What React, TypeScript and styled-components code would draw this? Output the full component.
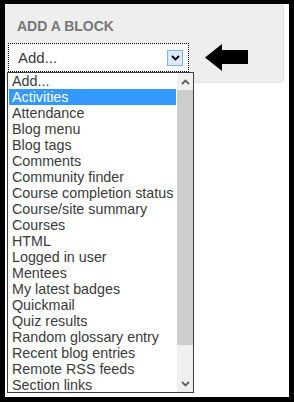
import React from "react";
import styled, { createGlobalStyle } from "styled-components";

const Global = createGlobalStyle`
  html, body { margin: 0; padding: 0; background: #000; }
  * { box-sizing: border-box; }
`;

const Frame = styled.div`
  width: 294px;
  height: 402px;
  border-style: solid;
  border-color: #000;
  border-width: 4px 5px 5px 5px;
  background: #fff;
  font-family: Arial, "Liberation Sans", sans-serif;
  overflow: hidden;
`;

const Panel = styled.div`
  width: 278px;
  height: 78px;
  background: #eeeeee;
  border-bottom-right-radius: 4px;
  box-shadow: 1px 1px 1px rgba(0, 0, 0, 0.12);
  padding: 14px 0 0 3px;
`;

const Title = styled.h2`
  margin: 0 0 9px 9px;
  font-size: 14px;
  line-height: 16px;
  font-weight: bold;
  color: #777;
  text-transform: uppercase;
`;

const Row = styled.div`
  display: flex;
  align-items: center;
`;

const Dropdown = styled.div`
  position: relative;
`;

const SelectBox = styled.div`
  width: 181px;
  height: 29px;
  border: 1px dotted #000;
  background: #fff;
  display: flex;
  align-items: center;
  justify-content: space-between;
  padding: 0 5px 0 9px;
  font-size: 15px;
  color: #3a3a3a;
`;

const DropButton = styled.div`
  width: 16px;
  height: 16px;
  background: #dbeafb;
  border: 1px solid #7eb4ea;
  display: flex;
  align-items: center;
  justify-content: center;
`;

const ArrowIcon = styled.svg`
  margin-left: 16px;
  display: block;
`;

const List = styled.div`
  position: absolute;
  top: 100%;
  left: -1px;
  width: 187px;
  height: 321px;
  border: 1px solid #3c3c3c;
  background: #fff;
  display: flex;
  z-index: 2;
`;

const Options = styled.ul`
  list-style: none;
  margin: 0;
  padding: 0 1px;
  flex: 1;
  overflow: hidden;
`;

const Option = styled.li<{ $active?: boolean }>`
  height: 16px;
  line-height: 16px;
  padding-left: 3px;
  font-size: 14.3px;
  white-space: nowrap;
  color: ${(p) => (p.$active ? "#fff" : "#3a3a3a")};
  background: ${(p) => (p.$active ? "#3399ff" : "transparent")};
`;

const Scrollbar = styled.div`
  width: 16px;
  background: #f0f0f0;
  display: flex;
  flex-direction: column;
`;

const ScrollButton = styled.div`
  height: 17px;
  display: flex;
  align-items: center;
  justify-content: center;
`;

const Thumb = styled.div`
  height: 255px;
  background: #cdcdcd;
`;

const Track = styled.div`
  flex: 1;
`;

const Chevron = ({ up, color = "#606060" }: { up?: boolean; color?: string }) => (
  <svg width="9" height="6" viewBox="0 0 9 6">
    <polyline
      points={up ? "1,5 4.5,1.5 8,5" : "1,1 4.5,4.5 8,1"}
      fill="none"
      stroke={color}
      strokeWidth="1.8"
    />
  </svg>
);

const items = [
  "Add...",
  "Activities",
  "Attendance",
  "Blog menu",
  "Blog tags",
  "Comments",
  "Community finder",
  "Course completion status",
  "Course/site summary",
  "Courses",
  "HTML",
  "Logged in user",
  "Mentees",
  "My latest badges",
  "Quickmail",
  "Quiz results",
  "Random glossary entry",
  "Recent blog entries",
  "Remote RSS feeds",
  "Section links",
];

export default function App() {
  return (
    <>
      <Global />
      <Frame>
        <Panel>
          <Title>Add a block</Title>
          <Row>
            <Dropdown>
              <SelectBox>
                <span>Add...</span>
                <DropButton>
                  <Chevron color="#000" />
                </DropButton>
              </SelectBox>
              <List>
                <Options>
                  {items.map((it, i) => (
                    <Option key={it} $active={i === 1}>
                      {it}
                    </Option>
                  ))}
                </Options>
                <Scrollbar>
                  <ScrollButton>
                    <Chevron up />
                  </ScrollButton>
                  <Thumb />
                  <Track />
                  <ScrollButton>
                    <Chevron />
                  </ScrollButton>
                </Scrollbar>
              </List>
            </Dropdown>
            <ArrowIcon width="44" height="27" viewBox="0 0 44 27">
              <polygon points="0,13.5 17,0 17,6 43,6 43,20 17,20 17,27" fill="#000" />
            </ArrowIcon>
          </Row>
        </Panel>
      </Frame>
    </>
  );
}
